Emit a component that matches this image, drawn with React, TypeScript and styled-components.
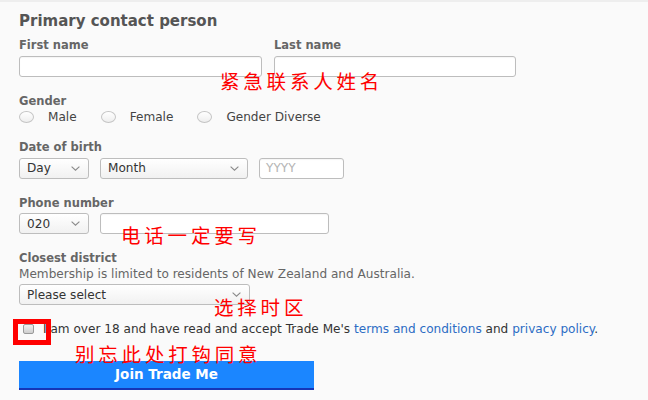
import styled, { createGlobalStyle } from "styled-components";

const GlobalStyle = createGlobalStyle`
  html, body {
    margin: 0;
    padding: 0;
    background: #fafafa;
  }
  body {
    font-family: "DejaVu Sans", "Liberation Sans", sans-serif;
  }
  * {
    box-sizing: border-box;
  }
`;

const Page = styled.div`
  position: relative;
  width: 648px;
  height: 400px;
  overflow: hidden;
  border-top: 2px solid #eeeeee;
  padding: 10px 0 0 19px;
`;

const Title = styled.h2`
  margin: 0 0 8px;
  font-size: 15px;
  line-height: 18px;
  font-weight: bold;
  color: #555555;
`;

const Sections = styled.div`
  display: flex;
  flex-direction: column;
  gap: 17px;
`;

const Section = styled.div`
  display: flex;
  flex-direction: column;
`;

const Row = styled.div<{ $gap?: number }>`
  display: flex;
  align-items: center;
  gap: ${(p) => p.$gap ?? 11}px;
`;

const Label = styled.div`
  font-size: 11.5px;
  line-height: 14px;
  font-weight: bold;
  color: #666666;
  margin-bottom: 3.5px;
`;

const Help = styled.div`
  font-size: 12.1px;
  line-height: 14px;
  color: #666666;
  margin: -2px 0 3.5px;
`;

const TextInput = styled.div<{ $w: number }>`
  width: ${(p) => p.$w}px;
  height: 21px;
  background: #ffffff;
  border: 1px solid #bdbdbd;
  border-radius: 3px;
  box-shadow: inset 0 1px 1px rgba(0, 0, 0, 0.04);
  font-size: 12.1px;
  line-height: 19px;
  padding-left: 6px;
  color: #b4b4b4;
`;

const Select = styled.div<{ $w: number }>`
  width: ${(p) => p.$w}px;
  height: 21px;
  display: flex;
  align-items: center;
  justify-content: space-between;
  padding: 0 8px 0 7px;
  background: linear-gradient(#ffffff, #f1f1f1);
  border: 1px solid #bdbdbd;
  border-radius: 3px;
  font-size: 12.1px;
  color: #333333;
`;

const Chevron = () => (
  <svg width="9" height="5" viewBox="0 0 9 5">
    <path d="M0.6 0.6 L4.5 4.2 L8.4 0.6" fill="none" stroke="#8a8a8a" strokeWidth="1.1" />
  </svg>
);

const RadioGroup = styled.div`
  display: flex;
  align-items: center;
  gap: 24px;
  height: 12px;
`;

const RadioOption = styled.div`
  display: flex;
  align-items: center;
  gap: 14px;
  font-size: 12.1px;
  color: #444444;
`;

const RadioDot = styled.span`
  width: 15px;
  height: 12px;
  border-radius: 50%;
  border: 1px solid #c4c4c4;
  background: linear-gradient(#ffffff, #eeeeee);
`;

const AgreeRow = styled.div`
  display: flex;
  align-items: center;
  gap: 9px;
  padding-left: 4px;
  font-size: 12.1px;
  line-height: 14px;
  color: #333333;
`;

const CheckBox = styled.span`
  width: 11px;
  height: 10px;
  flex: none;
  border: 1px solid #9a9a9a;
  border-radius: 2px;
  background: linear-gradient(#f0f0f0, #cfcfcf);
`;

const Link = styled.a`
  color: #2c6cc4;
  text-decoration: none;
`;

const JoinButton = styled.button`
  margin-top: 24.5px;
  width: 295px;
  height: 29px;
  border: none;
  border-bottom: 2px solid #1535b8;
  background: #1b86ff;
  color: #ffffff;
  font-family: "DejaVu Sans", sans-serif;
  font-size: 13.5px;
  font-weight: bold;
  padding: 0;
`;

const Note = styled.div<{ $x: number; $y: number }>`
  position: absolute;
  left: ${(p) => p.$x}px;
  top: ${(p) => p.$y}px;
  font-family: "Noto Sans CJK SC", sans-serif;
  font-size: 19.5px;
  line-height: 17px;
  letter-spacing: 3.8px;
  color: #ff0000;
  white-space: nowrap;
`;

const RedBox = styled.div`
  position: absolute;
  left: 13px;
  top: 317px;
  width: 38px;
  height: 26px;
  border: 5px solid #ff0000;
`;

export default function App() {
  return (
    <>
      <GlobalStyle />
      <Page>
        <Title>Primary contact person</Title>
        <Sections>
          <Row $gap={12}>
            <Section>
              <Label>First name</Label>
              <TextInput $w={243} />
            </Section>
            <Section>
              <Label>Last name</Label>
              <TextInput $w={242} />
            </Section>
          </Row>

          <Section>
            <Label>Gender</Label>
            <RadioGroup>
              <RadioOption>
                <RadioDot />
                Male
              </RadioOption>
              <RadioOption>
                <RadioDot />
                Female
              </RadioOption>
              <RadioOption>
                <RadioDot />
                Gender Diverse
              </RadioOption>
            </RadioGroup>
          </Section>

          <Section>
            <Label>Date of birth</Label>
            <Row>
              <Select $w={70}>
                Day
                <Chevron />
              </Select>
              <Select $w={148}>
                Month
                <Chevron />
              </Select>
              <TextInput $w={85}>YYYY</TextInput>
            </Row>
          </Section>

          <Section>
            <Label>Phone number</Label>
            <Row>
              <Select $w={70}>
                020
                <Chevron />
              </Select>
              <TextInput $w={229} />
            </Row>
          </Section>

          <Section>
            <Label>Closest district</Label>
            <Help>Membership is limited to residents of New Zealand and Australia.</Help>
            <Select $w={231}>
              Please select
              <Chevron />
            </Select>
          </Section>

          <AgreeRow>
            <CheckBox />
            <span>
              I am over 18 and have read and accept Trade Me's{" "}
              <Link>terms and conditions</Link> and <Link>privacy policy</Link>.
            </span>
          </AgreeRow>
        </Sections>

        <JoinButton>Join Trade Me</JoinButton>

        <Note $x={220} $y={70}>紧急联系人姓名</Note>
        <Note $x={121} $y={224}>电话一定要写</Note>
        <Note $x={214} $y={296}>选择时区</Note>
        <Note $x={75} $y={343}>别忘此处打钩同意</Note>
        <RedBox />
      </Page>
    </>
  );
}
